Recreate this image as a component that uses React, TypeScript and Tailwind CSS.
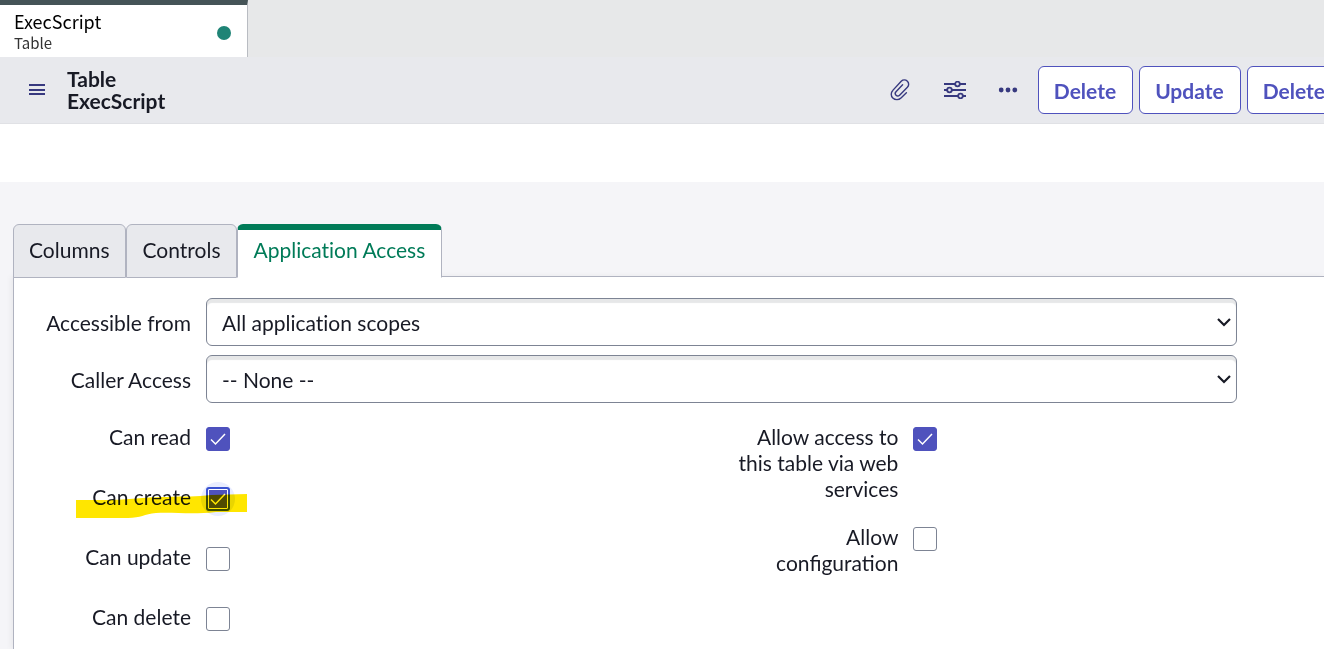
import { useState } from "react";
import clsx from "clsx";

const TABS = ["Columns", "Controls", "Application Access"];

const LEFT_FIELDS = [
  { id: "can_read", label: "Can read", checked: true },
  { id: "can_create", label: "Can create", checked: true, highlighted: true },
  { id: "can_update", label: "Can update", checked: false },
  { id: "can_delete", label: "Can delete", checked: false },
];

const RIGHT_FIELDS = [
  { id: "ws_access", label: "Allow access to this table via web services", checked: true },
  { id: "configuration", label: "Allow configuration", checked: false },
];

function MenuIcon() {
  return (
    <svg width="18" height="14" viewBox="0 0 18 14" fill="#37397f">
      <path d="M1 1h16v2H1zM1 6h16v2H1zM1 10h16v2H1z" />
    </svg>
  );
}

function PaperclipIcon() {
  return (
    <svg width="24" height="24" viewBox="0 0 24 24" fill="none" stroke="#37397f" strokeWidth="1.4" strokeLinecap="round" strokeLinejoin="round">
      <path d="M18.4 14.8l-5.4 5.2a5.7 5.4 0 0 1-8.2 0a5.4 5.4 0 0 1 0-7.6L13.2 3.2a4.4 4.2 0 0 1 6.2 0a4.2 4.2 0 0 1 0 6l-7.8 8a2.5 2.4 0 0 1-3.6 0a2.5 2.5 0 0 1 0-3.5l6.6-6.9" />
    </svg>
  );
}

function SlidersIcon() {
  return (
    <svg width="22" height="18" viewBox="0 0 22 18" fill="none" stroke="#37397f" strokeWidth="1.8">
      <path d="M0 3h11M16 3h6M0 9h3M8 9h14M0 15h14M19 15h3" />
      <circle cx="13.5" cy="3" r="2.3" />
      <circle cx="5.5" cy="9" r="2.3" />
      <circle cx="16.5" cy="15" r="2.3" />
    </svg>
  );
}

function DotsIcon() {
  return (
    <svg width="20" height="6" viewBox="0 0 20 6" fill="#37397f">
      <circle cx="3.2" cy="3" r="2.4" />
      <circle cx="10" cy="3" r="2.4" />
      <circle cx="16.8" cy="3" r="2.4" />
    </svg>
  );
}

function ActionButton({ children }: { children: string }) {
  return (
    <button
      type="button"
      className="h-12 shrink-0 rounded-md border border-[#4f52bd] bg-white pt-0.5 pr-4 pl-[15px] text-[21px] font-bold text-[#4f52bd]"
    >
      {children}
    </button>
  );
}

function SelectField({ id, label, value }: { id: string; label: string; value: string }) {
  return (
    <div className="flex items-center">
      <label htmlFor={id} className="w-[177px] shrink-0 pt-0.5 pl-4 text-right">
        {label}
      </label>
      <div className="relative ml-[15px] flex-1">
        <select
          id={id}
          className="block h-12 w-full appearance-none rounded-md border border-[#7d8494] bg-white px-[15px] pt-0.5 shadow-[inset_0_4px_1px_#e6e7e8] [font-variant-ligatures:no-common-ligatures]"
        >
          <option>{value}</option>
        </select>
        <svg
          className="pointer-events-none absolute top-5 right-1.5"
          width="14"
          height="9"
          viewBox="0 0 14 9"
          fill="none"
          stroke="#181a25"
          strokeWidth="2.2"
        >
          <path d="M1 1l6 6 6-6" />
        </svg>
      </div>
    </div>
  );
}

type CheckFieldProps = {
  id: string;
  label: string;
  checked: boolean;
  highlighted?: boolean;
};

function CheckField({ id, label, checked, highlighted = false }: CheckFieldProps) {
  const [on, setOn] = useState(checked);

  return (
    <div className="relative flex items-start">
      <label htmlFor={id} className="w-[177px] shrink-0 pb-1 pl-4 text-right">
        {label}
      </label>
      <span className="relative mt-[3px] ml-[15px] grid size-6 shrink-0">
        {highlighted && <span className="absolute -inset-[5px] rounded-full bg-[#e9edff]" />}
        <input
          id={id}
          type="checkbox"
          checked={on}
          onChange={() => setOn(!on)}
          className={clsx(
            "relative size-6 appearance-none rounded-[3px]",
            on ? "bg-[#4f52bd]" : "bg-white",
            highlighted
              ? "border-2 border-[#3a52d0] shadow-[inset_0_0_0_1px_#ffffff]"
              : on
                ? "border border-[#4f52bd]"
                : "border border-[#7d8494]"
          )}
        />
        {on && (
          <svg
            className="pointer-events-none absolute inset-0"
            width="24"
            height="24"
            viewBox="0 0 24 24"
            fill="none"
            stroke="#fff"
            strokeWidth="1.5"
          >
            <path d="M5 12.5l4.5 4.5L19 7" />
          </svg>
        )}
      </span>
      {/* Marker stroke */}
      {highlighted && (
        <svg
          className="pointer-events-none absolute top-2 left-[62px] mix-blend-multiply"
          width="172"
          height="28"
          viewBox="0 0 172 28"
          fill="#ffe600"
        >
          <path d="M0 8L30 8C55 8 65 5 90 5C110 4 120 5 135 3L171 2V20L140 20C115 23 100 20 80 21C68 22 65 26 52 26L0 26Z" />
        </svg>
      )}
    </div>
  );
}

export default function App() {
  const [activeTab, setActiveTab] = useState("Application Access");

  return (
    <div className="min-h-screen overflow-hidden bg-[#f5f5f8] font-['Lato',sans-serif] text-[21px] leading-[26px] text-[#181a25]">
      {/* Window tabs */}
      <div className="flex bg-[#e7e8e9]">
        <div className="flex h-[57px] w-62 items-start justify-between border-t-5 border-r border-t-[#455457] border-r-[#b9bcc2] bg-white pt-1 pr-4 pl-[14px] font-['Noto_Sans_CJK_SC',sans-serif]">
          <div>
            <div className="text-[18px] leading-6 text-black">ExecScript</div>
            <div className="text-[15px] leading-5 text-[#333]">Table</div>
          </div>
          <span className="mt-[17px] size-[14px] rounded-full bg-[#1f8476]" />
        </div>
      </div>

      {/* Form header */}
      <header className="flex h-[67px] items-center overflow-hidden border-b border-[#e0e1e5] bg-[#e8e9ed]">
        <button type="button" aria-label="Menu" className="ml-7">
          <MenuIcon />
        </button>
        <h1 className="ml-[21px] text-[21px] leading-[22px] font-bold">
          Table
          <br />
          ExecScript
        </h1>
        <div className="-mr-[18px] ml-auto flex items-center gap-1.5">
          <div className="mr-[14px] flex items-center gap-8">
            <button type="button" aria-label="Attachments">
              <PaperclipIcon />
            </button>
            <button type="button" aria-label="Personalize form">
              <SlidersIcon />
            </button>
            <button type="button" aria-label="More options">
              <DotsIcon />
            </button>
          </div>
          <ActionButton>Delete</ActionButton>
          <ActionButton>Update</ActionButton>
          <ActionButton>Delete</ActionButton>
        </div>
      </header>

      <div className="h-[58px] bg-white" />

      <main className="ml-[13px] pt-[42px]">
        <div className="relative flex [font-variant-ligatures:no-common-ligatures]" role="tablist">
          {TABS.map((tab) => (
            <button
              key={tab}
              type="button"
              role="tab"
              aria-selected={tab === activeTab}
              onClick={() => setActiveTab(tab)}
              className={clsx(
                "h-[54px] rounded-t-md border pr-4 pl-[15px]",
                tab === activeTab
                  ? "border-t-6 border-r-[#b0b3c0] border-b-white border-l-[#b0b3c0] border-t-[#007b58] bg-white pb-[7px] text-[#007b58]"
                  : "border-[#b0b3c0] bg-[#e8e9ed] pb-0.5"
              )}
            >
              {tab}
            </button>
          ))}
        </div>

        <form className="-mt-0.5 min-h-[373px] border-t border-l border-[#b0b3c0] bg-white pt-[21px] shadow-[-2px_0_6px_#0000000d]">
          <div className="mr-[87px] flex flex-col gap-[9px]">
            <SelectField id="accessible_from" label="Accessible from" value="All application scopes" />
            <SelectField id="caller_access" label="Caller Access" value="-- None --" />
          </div>
          <div className="mt-[21px] flex">
            <div className="flex w-[54%] flex-col gap-[30px]">
              {LEFT_FIELDS.map((field) => (
                <CheckField key={field.id} {...field} />
              ))}
            </div>
            <div className="flex flex-1 flex-col gap-[18px]">
              {RIGHT_FIELDS.map((field) => (
                <CheckField key={field.id} {...field} />
              ))}
            </div>
          </div>
        </form>
      </main>
    </div>
  );
}
